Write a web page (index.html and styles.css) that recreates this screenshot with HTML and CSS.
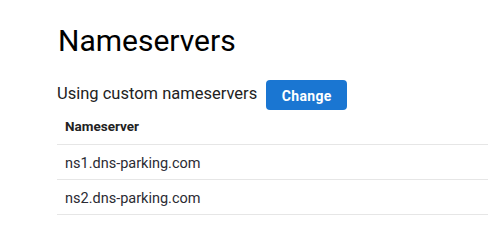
FILE: index.html
```html
<!DOCTYPE html>
<html lang="en">
<head>
    <meta charset="UTF-8">
    <meta name="viewport" content="width=device-width, initial-scale=1.0">
    <title>Nameservers</title>
    <link rel="stylesheet" href="styles.css">
</head>
<body>
    <div class="panel">
        <h1>Nameservers</h1>
        <div class="status">
            <span class="status-text">Using custom nameservers</span>
            <button class="change-btn">Change</button>
        </div>
        <table class="ns-table">
            <thead>
                <tr><th>Nameserver</th></tr>
            </thead>
            <tbody>
                <tr><td>ns1.dns-parking.com</td></tr>
                <tr><td>ns2.dns-parking.com</td></tr>
            </tbody>
        </table>
    </div>
</body>
</html>
```

FILE: styles.css
```css
body {
    font-family: Roboto, "Liberation Sans", sans-serif;
    background-color: #fff;
    color: #1d1d1f;
    margin: 0;
}
.panel {
    padding: 23px 0 0 57px;
}
.panel h1 {
    margin: 0;
    font-size: 30px;
    line-height: 36px;
    font-weight: 400;
    color: #000;
    padding-left: 1px;
}
.status {
    display: flex;
    align-items: center;
    margin-top: 21px;
    height: 30px;
}
.status-text {
    font-size: 16.5px;
    color: #222;
    margin-top: -4px;
}
.change-btn {
    margin-left: 9px;
    width: 81px;
    height: 30px;
    border: none;
    border-radius: 4px;
    background-color: #1a76d2;
    color: #fff;
    font-family: inherit;
    font-size: 14px;
    font-weight: 700;
    letter-spacing: 0.3px;
    padding: 2px 0 0;
    cursor: pointer;
}
.ns-table {
    width: 100%;
    border-collapse: collapse;
}
.ns-table th,
.ns-table td {
    box-sizing: border-box;
    padding: 0 8px;
    text-align: left;
    vertical-align: middle;
    border-bottom: 1px solid #e6e6e6;
}
.ns-table th {
    height: 34px;
    font-size: 13.5px;
    font-weight: 700;
    color: #222;
    padding-bottom: 2px;
}
.ns-table td {
    height: 35px;
    font-size: 14.5px;
    color: #2b2b33;
    padding-top: 3px;
}
```
